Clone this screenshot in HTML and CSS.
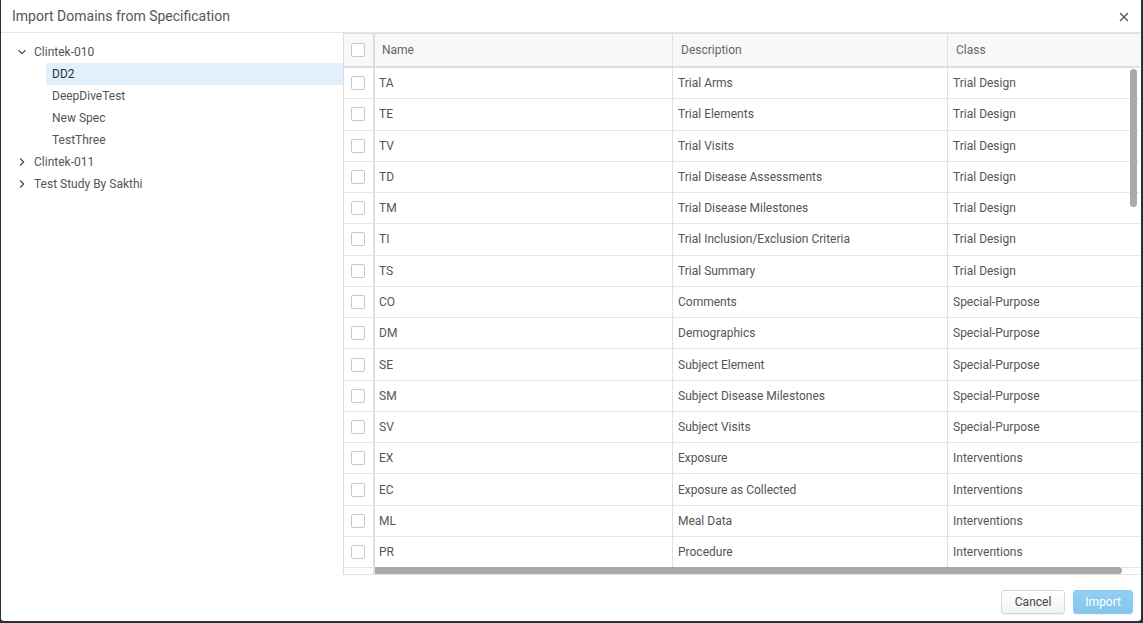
FILE: index.html
```
<!DOCTYPE html>
<html lang="en">
<head>
    <meta charset="UTF-8">
    <title>Import Domains from Specification</title>
    <link rel="stylesheet" href="styles.css">
</head>
<body>
    <div class="dialog">
        <div class="titlebar">
            <span class="title">Import Domains from Specification</span>
            <span class="close">
                <svg width="10" height="10" viewBox="0 0 10 10"><path d="M1 1L9 9M9 1L1 9" stroke="#555" stroke-width="1.3"/></svg>
            </span>
        </div>

        <div class="content">
            <div class="tree">
                <div class="node">
                    <span class="toggle"><svg width="10" height="10" viewBox="0 0 10 10"><path d="M1.5 3.2L5 6.7L8.5 3.2" fill="none" stroke="#444" stroke-width="1.2"/></svg></span>
                    <span class="label">Clintek-010</span>
                </div>
                <div class="node child selected"><span class="label">DD2</span></div>
                <div class="node child"><span class="label">DeepDiveTest</span></div>
                <div class="node child"><span class="label">New Spec</span></div>
                <div class="node child"><span class="label">TestThree</span></div>
                <div class="node">
                    <span class="toggle"><svg width="10" height="10" viewBox="0 0 10 10"><path d="M3.2 1.5L6.7 5L3.2 8.5" fill="none" stroke="#444" stroke-width="1.2"/></svg></span>
                    <span class="label">Clintek-011</span>
                </div>
                <div class="node">
                    <span class="toggle"><svg width="10" height="10" viewBox="0 0 10 10"><path d="M3.2 1.5L6.7 5L3.2 8.5" fill="none" stroke="#444" stroke-width="1.2"/></svg></span>
                    <span class="label">Test Study By Sakthi</span>
                </div>
            </div>

            <div class="grid">
                <div class="grid-head">
                    <div class="cell check"><span class="box"></span></div>
                    <div class="cell">Name</div>
                    <div class="cell">Description</div>
                    <div class="cell">Class</div>
                </div>
                <div class="grid-body" id="gridBody"></div>
                <div class="grid-foot">
                    <div class="cell check"></div>
                    <div class="cell"></div>
                </div>
                <div class="vscroll"></div>
                <div class="hscroll"></div>
            </div>
        </div>

        <div class="footer">
            <button class="btn">Cancel</button>
            <button class="btn primary">Import</button>
        </div>
    </div>

    <script>
        const domains = [
            ["TA", "Trial Arms", "Trial Design"],
            ["TE", "Trial Elements", "Trial Design"],
            ["TV", "Trial Visits", "Trial Design"],
            ["TD", "Trial Disease Assessments", "Trial Design"],
            ["TM", "Trial Disease Milestones", "Trial Design"],
            ["TI", "Trial Inclusion/Exclusion Criteria", "Trial Design"],
            ["TS", "Trial Summary", "Trial Design"],
            ["CO", "Comments", "Special-Purpose"],
            ["DM", "Demographics", "Special-Purpose"],
            ["SE", "Subject Element", "Special-Purpose"],
            ["SM", "Subject Disease Milestones", "Special-Purpose"],
            ["SV", "Subject Visits", "Special-Purpose"],
            ["EX", "Exposure", "Interventions"],
            ["EC", "Exposure as Collected", "Interventions"],
            ["ML", "Meal Data", "Interventions"],
            ["PR", "Procedure", "Interventions"]
        ];

        // Build grid rows
        const body = document.getElementById('gridBody');
        domains.forEach(d => {
            const row = document.createElement('div');
            row.classList.add('row');
            row.innerHTML = `
                <div class="cell check"><span class="box"></span></div>
                <div class="cell">${d[0]}</div>
                <div class="cell">${d[1]}</div>
                <div class="cell">${d[2]}</div>
            `;
            body.appendChild(row);
        });
    </script>
</body>
</html>
```

FILE: styles.css
```
* {
    box-sizing: border-box;
}
body {
    margin: 0;
    background: #263238;
    font-family: Roboto, "Liberation Sans", Arial, sans-serif;
    font-size: 12px;
    color: #555;
}
.dialog {
    margin: 0 2px 0 1px;
    height: 621px;
    background: #fff;
    border-radius: 0 0 3px 3px;
    display: flex;
    flex-direction: column;
}
.titlebar {
    height: 33px;
    border-bottom: 1px solid #e6e6e6;
    display: flex;
    align-items: center;
    justify-content: space-between;
    padding: 0 12px 0 11px;
}
.title {
    font-size: 14px;
    color: #555;
}
.close {
    display: flex;
    margin-top: 1px;
}
.content {
    display: flex;
    height: 542px;
}
.tree {
    width: 342px;
    padding-top: 8px;
}
.node {
    height: 22px;
    display: flex;
    align-items: center;
}
.toggle {
    width: 16px;
    margin-left: 16px;
    display: flex;
}
.node .label {
    margin-left: 1px;
}
.node.child {
    margin-left: 45px;
    padding-left: 5px;
}
.node.selected {
    background: #e0f0fc;
    color: #333;
}
.grid {
    flex: 1;
    position: relative;
    border: 1px solid #dcdcdc;
    border-right: none;
    border-bottom-color: #e4e4e4;
    margin-right: 1px;
    overflow: hidden;
    display: flex;
    flex-direction: column;
}
.grid-head, .row, .grid-foot {
    display: grid;
    grid-template-columns: 31px 297px 275px 1fr;
}
.grid-head {
    height: 34px;
    flex-shrink: 0;
    background: #f8f8f8;
    border-bottom: 2px solid #dedede;
    color: #666;
}
.grid-head .cell {
    padding-left: 8px;
}
.grid-head .cell:nth-child(2) {
    padding-left: 7px;
}
.cell {
    display: flex;
    align-items: center;
    padding-left: 5px;
    border-left: 1px solid #e2e2e2;
    white-space: nowrap;
    overflow: hidden;
}
.cell:first-child,
.cell:nth-child(2) {
    border-left: none;
}
.cell:nth-child(2) {
    padding-left: 4px;
}
.cell.check, .grid-head .cell.check {
    padding-left: 7px;
    border-right: 2px solid #dedede;
}
.row {
    height: 31.27px;
    border-bottom: 1px solid #e6e6e6;
}
.box {
    width: 14px;
    height: 14px;
    border: 1px solid #c8c8c8;
    border-radius: 2px;
    background: #fff;
}
.grid-body {
    flex: 1;
    min-height: 0;
}
.grid-foot {
    grid-template-columns: 31px 1fr;
    height: 7px;
    flex-shrink: 0;
    border-top: 1px solid #e6e6e6;
}
.vscroll {
    position: absolute;
    right: 3px;
    top: 35px;
    width: 7px;
    height: 138px;
    background: #a9a9a9;
    border-radius: 4px;
}
.hscroll {
    position: absolute;
    left: 31px;
    right: 18px;
    bottom: 0;
    height: 7px;
    background: #a9a9a9;
    border-radius: 0 4px 4px 0;
}
.footer {
    flex: 1;
    display: flex;
    justify-content: flex-end;
    align-items: center;
    gap: 8px;
    padding: 8px 8px 0 0;
}
.btn {
    font-family: Roboto, "Liberation Sans", Arial, sans-serif;
    font-size: 12px;
    height: 24px;
    padding: 0 13px;
    border: 1px solid #d6d6d6;
    border-radius: 3px;
    background: linear-gradient(#fff, #f3f3f3);
    color: #444;
    box-shadow: 0 1px 1px rgba(0, 0, 0, 0.06);
}
.btn.primary {
    background: linear-gradient(#92cff5, #84c4ec);
    border-color: #8cc9f0;
    color: #fff;
    padding: 0 11px;
}
```
